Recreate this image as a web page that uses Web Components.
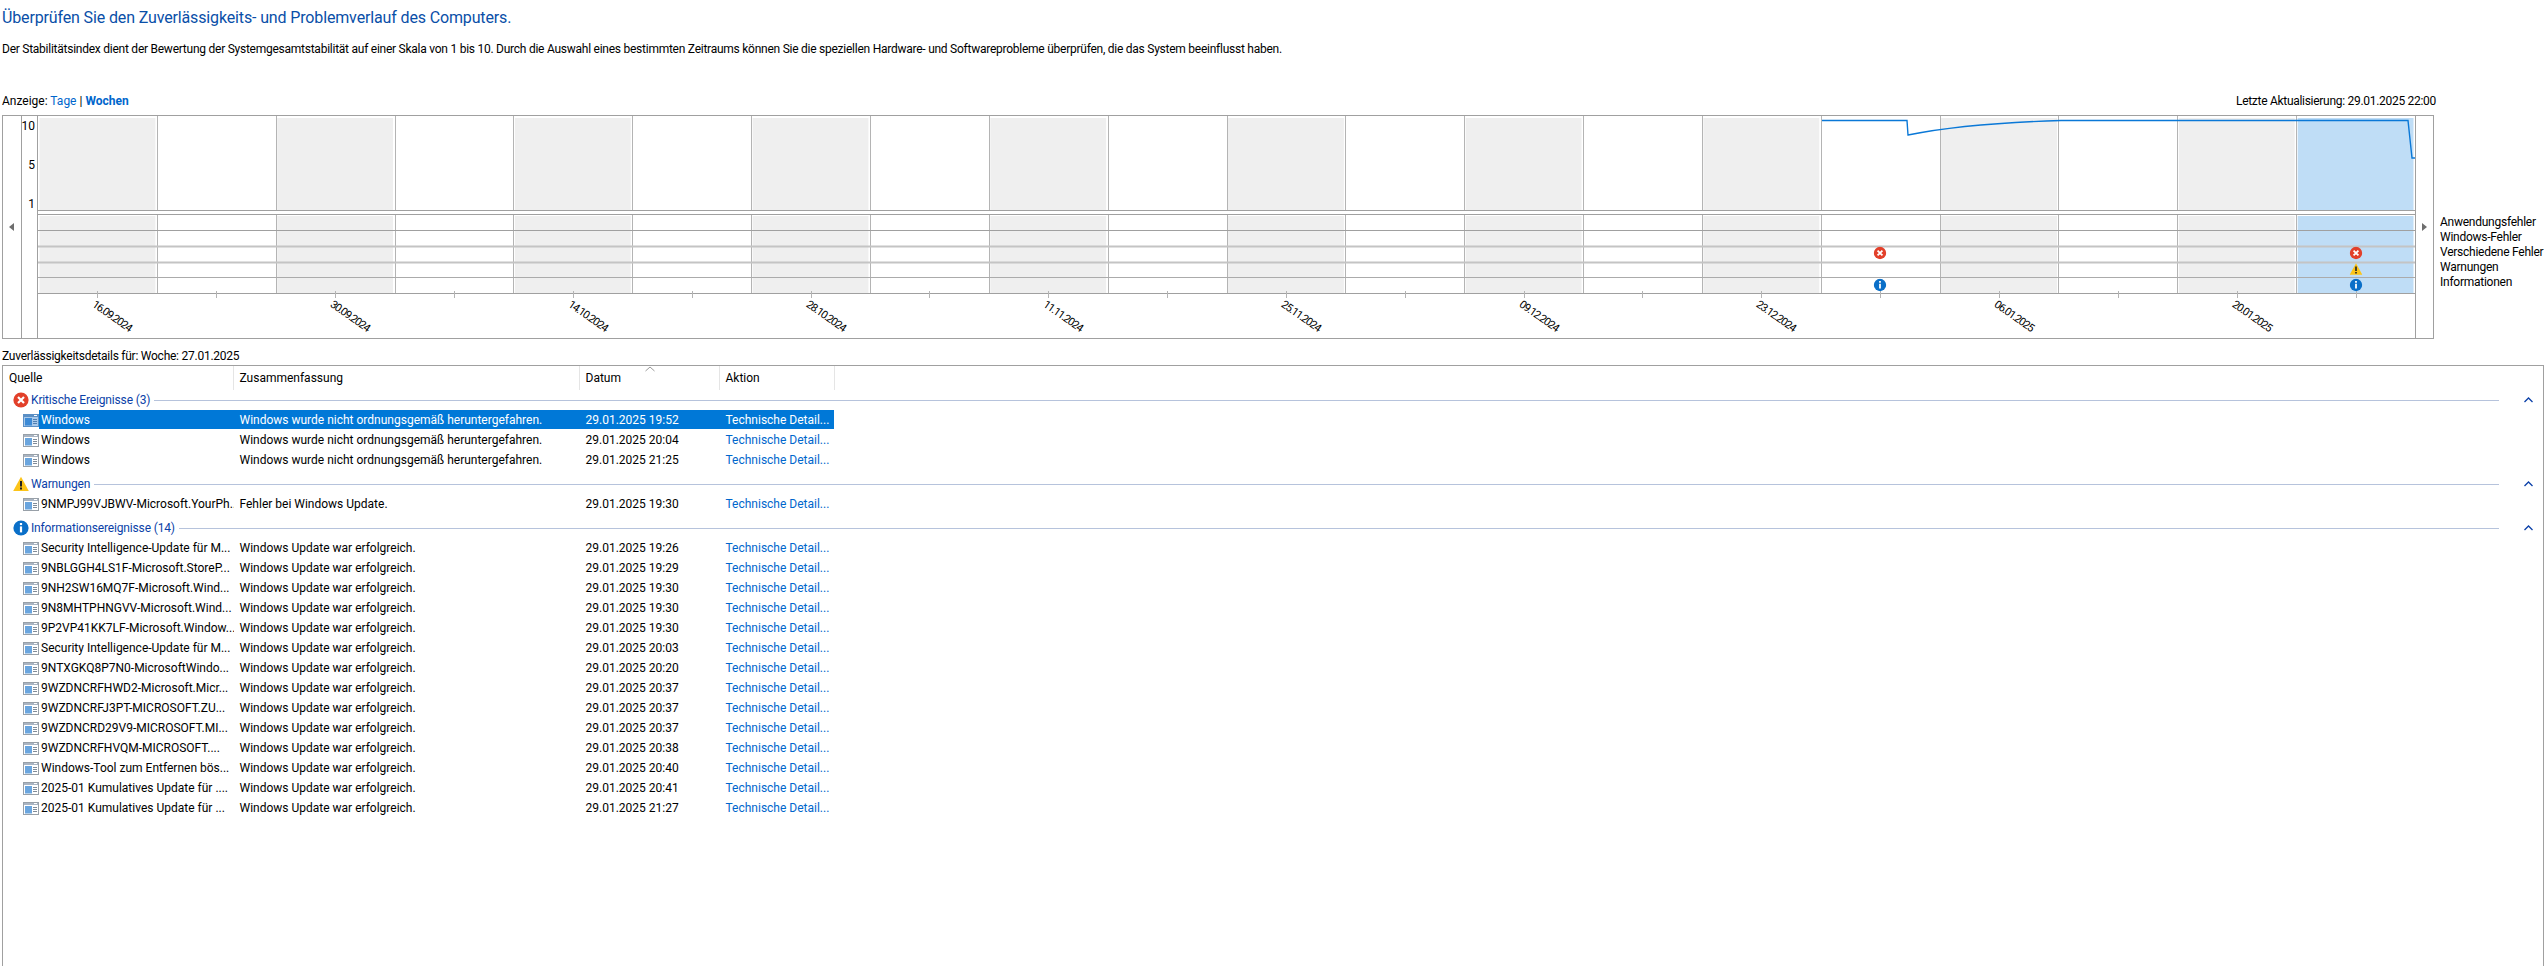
<!DOCTYPE html>
<html lang="de">
<head>
<meta charset="utf-8">
<title>Zuverlässigkeitsverlauf</title>
<style>
  html,body{margin:0;padding:0;background:#fff;height:100%;overflow:hidden;}
  body{font:12px/16px Roboto,"Noto Sans",sans-serif;color:#000;}
</style>
</head>
<body>
<rel-page></rel-page>
<script>
const FONT = `Roboto,"Noto Sans",sans-serif`;
const ICONS = {
  error: s => `<svg width="${s}" height="${s}" viewBox="0 0 16 16"><circle cx="8" cy="8" r="7.6" fill="#e2402a"/><path d="M5 5l6 6M11 5l-6 6" stroke="#fff" stroke-width="2.2"/></svg>`,
  warn: s => `<svg width="${s}" height="${s}" viewBox="0 0 16 16"><path d="M8 .8L15.8 15H.2z" fill="#fcc419"/><path d="M8 5v5.4" stroke="#222" stroke-width="2"/><path d="M7 11.6h2v2H7z" fill="#222"/></svg>`,
  info: s => `<svg width="${s}" height="${s}" viewBox="0 0 16 16"><circle cx="8" cy="8" r="7.6" fill="#0a6fc8"/><path d="M8 6.4v6" stroke="#fff" stroke-width="2.2"/><path d="M6.9 3h2.2v2.1H6.9z" fill="#fff"/></svg>`
};

class RelChart extends HTMLElement{
  constructor(){
    super();
    this.attachShadow({mode:'open'});
    const colW = 118.85, left = 0;
    const dates = ['16.09.2024','30.09.2024','14.10.2024','28.10.2024','11.11.2024','25.11.2024','09.12.2024','23.12.2024','06.01.2025','20.01.2025'];
    let fills = '', lines = '', ticks = '', labels = '';
    for(let i=0;i<20;i++){
      const x = left + i*colW;
      if(i==19){
        fills += `<rect x="${x+1.5}" y="2" width="${colW-3}" height="92" fill="#bfddf6"/><rect x="${x+1.5}" y="100" width="${colW-3}" height="77" fill="#bfddf6"/>`;
      }else if(i%2==0){
        fills += `<rect x="${x+1.5}" y="2" width="${colW-3}" height="92" fill="#efefef"/><rect x="${x+1.5}" y="100" width="${colW-3}" height="77" fill="#efefef"/>`;
      }
      if(i>0){
        const lx = Math.round(x)+.5;
        lines += `<path d="M${lx} 0V95M${lx} 99V178" stroke="#b4b4b4"/>`;
      }
      const c = Math.round(x+colW/2)+.5;
      ticks += `<path d="M${c} 175V182" stroke="#b4b4b4"/>`;
      if(i%2==0){
        labels += `<text x="${c-6}" y="190" transform="rotate(35 ${c-6} 190)">${dates[i/2]}</text>`;
      }
    }
    const ev = (x,y,kind) => `<g transform="translate(${x-6.5} ${y-6.5})">${ICONS[kind](13)}</g>`;
    this.shadowRoot.innerHTML = `
      <style>
        :host{display:grid;grid-template-columns:18px 17px 2377px 18px;width:2432px;height:224px;border:1px solid #a0a0a0;box-sizing:border-box;margin-left:2px;}
        .arrow{display:flex;align-items:center;justify-content:center;padding-bottom:1px;}
        .axis{border-left:1px solid #a0a0a0;border-right:1px solid #a0a0a0;display:flex;flex-direction:column;align-items:flex-end;padding:2px 2px 0 0;font:12px/16px ${FONT};box-sizing:border-box;}
        .axis span{height:39px;}
        svg.plot{display:block;overflow:visible;}
        svg.plot text{font:11px ${FONT};letter-spacing:-1px;fill:#000;}
        .r{border-left:1px solid #a0a0a0;}
      </style>
      <div class="arrow"><svg width="6" height="8"><path d="M5 0v8L0 4z" fill="#6e6e6e"/></svg></div>
      <div class="axis"><span>10</span><span>5</span><span>1</span></div>
      <svg class="plot" width="2377" height="222" viewBox="0 0 2377 222">
        ${fills}${lines}
        <path d="M0 94.500H2377M0 98.500H2377M0 114.500H2377M0 177.500H2377" stroke="#a0a0a0" fill="none"/>
        <path d="M0 130.500H2377M0 146.500H2377" stroke="#c4c4c4" stroke-width="2" fill="none"/>
        <path d="M0 161.500H2377" stroke="#ababab" fill="none"/>
        ${ticks}
        <path d="M1784 4.500H1869L1870 19C1910 11 1970 6 2023 4.500H2370L2374 42H2377" stroke="#0a78d7" stroke-width="1.4" fill="none"/>
        ${ev(1842,137,'error')}${ev(1842,169,'info')}
        ${ev(2318,137,'error')}${ev(2318,153,'warn')}${ev(2318,169,'info')}
        ${labels}
      </svg>
      <div class="arrow r"><svg width="6" height="8"><path d="M0 0v8L5 4z" fill="#6e6e6e"/></svg></div>`;
  }
}
customElements.define('rel-chart',RelChart);

class RelLegend extends HTMLElement{
  constructor(){
    super();
    this.attachShadow({mode:'open'});
    this.shadowRoot.innerHTML = `
      <style>
        :host{display:block;position:absolute;left:2440px;top:215px;font:12px/15px ${FONT};letter-spacing:-.25px;white-space:nowrap;}
        div{height:15px;}
      </style>
      <div>Anwendungsfehler</div><div>Windows-Fehler</div><div>Verschiedene Fehler</div><div>Warnungen</div><div>Informationen</div>`;
  }
}
customElements.define('rel-legend',RelLegend);

// columns are shared by the header and the rows
const GRID = `display:grid;grid-template-columns:230.500px 346px 140px 115.500px;`;

class RelRow extends HTMLElement{
  constructor(){
    super();
    this.attachShadow({mode:'open'});
    const sel = this.hasAttribute('selected');
    this.shadowRoot.innerHTML = `
      <style>
        :host{display:block;height:20px;}
        .row{${GRID}width:832px;height:20px;align-items:center;font:12px/19px ${FONT};white-space:nowrap;position:relative;}
        .c{padding-left:6px;overflow:hidden;height:19px;position:relative;}
        .c0{padding-left:38px;}
        .ic{position:absolute;left:20px;top:4px;display:block;}
        .hl{position:absolute;left:36px;top:0;width:795px;height:19px;background:#0078d7;}
        a{color:#06c;text-decoration:none;}
        .sel,.sel a{color:#fff;}
      </style>
      <div class="row ${sel?'sel':''}">
        ${sel?'<div class="hl"></div>':''}
        <div class="c c0"><slot name="src"></slot></div>
        <div class="c"><slot name="sum"></slot></div>
        <div class="c"><slot name="date"></slot></div>
        <div class="c"><a>Technische Detail...</a></div>
        <svg class="ic" width="16" height="13" viewBox="0 0 16 13">
          <rect x=".5" y=".5" width="15" height="12" fill="${sel?'#a9c9ea':'#fff'}" stroke="${sel?'#5b8fc4':'#98a0a8'}"/>
          <rect x="1" y="1" width="14" height="2" fill="${sel?'#5b8fc4':'#a9b4c2'}"/>
          <rect x="11" y="1" width="3" height="1" fill="#fff"/>
          <rect x="2" y="4" width="7" height="7.500" fill="${sel?'#3c8ad6':'#6aa5de'}"/>
          <path d="M10 5.500h4M10 7.500h4M10 9.500h4" stroke="${sel?'#4f7fb2':'#7f8b99'}"/>
        </svg>
      </div>`;
  }
}
customElements.define('rel-row',RelRow);

class RelGroup extends HTMLElement{
  constructor(){
    super();
    this.attachShadow({mode:'open'});
    this.shadowRoot.innerHTML = `
      <style>
        :host{display:block;margin-bottom:4px;}
        .h{display:flex;align-items:center;height:20px;position:relative;padding-left:10px;font:12px/20px ${FONT};letter-spacing:-.15px;color:#0a3fa8;}
        .h svg.i{flex:none;}
        .name{margin-left:2px;}
        .line{flex:1;height:1px;background:#b6c3dc;margin:0 44px 0 4px;}
        .chev{position:absolute;right:10px;top:7px;}
        ::slotted(*){display:block;}
      </style>
      <div class="h">
        ${ICONS[this.getAttribute('kind')](16)}
        <span class="name">${this.getAttribute('label')}</span><div class="line"></div>
        <svg class="chev" width="9" height="6"><path d="M.5 5L4.500 1l4 4" stroke="#0a3fa8" fill="none" stroke-width="1.300"/></svg>
      </div>
      <slot></slot>`;
  }
}
customElements.define('rel-group',RelGroup);

class RelTable extends HTMLElement{
  constructor(){
    super();
    this.attachShadow({mode:'open'});
    this.shadowRoot.innerHTML = `
      <style>
        :host{display:block;position:absolute;left:2px;top:365px;right:0;bottom:-1px;border:1px solid #a0a0a0;box-sizing:border-box;overflow:hidden;}
        .head{${GRID}width:832px;height:24px;font:12px/24px ${FONT};position:relative;}
        .head div{padding-left:6px;border-right:1px solid #e5e5e5;}
        .sort{position:absolute;left:642px;top:0;}
        .body{padding-top:0;}
      </style>
      <div class="head">
        <div>Quelle</div><div>Zusammenfassung</div><div>Datum</div><div>Aktion</div>
        <svg class="sort" width="10" height="6"><path d="M.5 5L5 1l4.500 4" stroke="#9a9a9a" fill="none"/></svg>
      </div>
      <div class="body"><slot></slot></div>`;
  }
}
customElements.define('rel-table',RelTable);

class RelPage extends HTMLElement{
  constructor(){
    super();
    this.attachShadow({mode:'open'});
    const row = (src,sum,date,sel) => `<rel-row ${sel?'selected':''}><span slot="src">${src}</span><span slot="sum">${sum}</span><span slot="date">${date}</span></rel-row>`;
    const shut = 'Windows wurde nicht ordnungsgemäß heruntergefahren.';
    const ok = 'Windows Update war erfolgreich.';
    const updates = [
      ['Security Intelligence-Update für M...','29.01.2025 19:26'],
      ['9NBLGGH4LS1F-Microsoft.StoreP...','29.01.2025 19:29'],
      ['9NH2SW16MQ7F-Microsoft.Wind...','29.01.2025 19:30'],
      ['9N8MHTPHNGVV-Microsoft.Wind...','29.01.2025 19:30'],
      ['9P2VP41KK7LF-Microsoft.Window...','29.01.2025 19:30'],
      ['Security Intelligence-Update für M...','29.01.2025 20:03'],
      ['9NTXGKQ8P7N0-MicrosoftWindo...','29.01.2025 20:20'],
      ['9WZDNCRFHWD2-Microsoft.Micr...','29.01.2025 20:37'],
      ['9WZDNCRFJ3PT-MICROSOFT.ZU...','29.01.2025 20:37'],
      ['9WZDNCRD29V9-MICROSOFT.MI...','29.01.2025 20:37'],
      ['9WZDNCRFHVQM-MICROSOFT....','29.01.2025 20:38'],
      ['Windows-Tool zum Entfernen bös...','29.01.2025 20:40'],
      ['2025-01 Kumulatives Update für ....','29.01.2025 20:41'],
      ['2025-01 Kumulatives Update für ...','29.01.2025 21:27']
    ];
    this.shadowRoot.innerHTML = `
      <style>
        :host{display:block;position:relative;width:2544px;height:966px;overflow:hidden;font:12px/16px ${FONT};}
        .title{font-size:16px;line-height:20px;letter-spacing:-.14px;color:#0a4fa8;padding:8px 0 0 2px;height:28px;}
        .desc{padding:5px 0 0 2px;height:43px;letter-spacing:-.25px;}
        .bar{display:flex;justify-content:space-between;width:2436px;padding-left:2px;height:14px;margin-top:9px;line-height:16px;margin-bottom:8px;box-sizing:border-box;}
        .upd{letter-spacing:-.29px;}
        a{color:#06c;text-decoration:none;}
        b{font-weight:700;}
        .det{position:absolute;left:2px;top:348px;letter-spacing:-.25px;}
      </style>
      <div class="title">Überprüfen Sie den Zuverlässigkeits- und Problemverlauf des Computers.</div>
      <div class="desc">Der Stabilitätsindex dient der Bewertung der Systemgesamtstabilität auf einer Skala von 1 bis 10. Durch die Auswahl eines bestimmten Zeitraums können Sie die speziellen Hardware- und Softwareprobleme überprüfen, die das System beeinflusst haben.</div>
      <div class="bar"><span>Anzeige: <a>Tage</a> | <a><b>Wochen</b></a></span><span class="upd">Letzte Aktualisierung: 29.01.2025 22:00</span></div>
      <rel-chart></rel-chart>
      <rel-legend></rel-legend>
      <div class="det">Zuverlässigkeitsdetails für: Woche: 27.01.2025</div>
      <rel-table>
        <rel-group kind="error" label="Kritische Ereignisse (3)">
          ${row('Windows',shut,'29.01.2025 19:52',true)}${row('Windows',shut,'29.01.2025 20:04')}${row('Windows',shut,'29.01.2025 21:25')}
        </rel-group>
        <rel-group kind="warn" label="Warnungen">
          ${row('9NMPJ99VJBWV-Microsoft.YourPh...','Fehler bei Windows Update.','29.01.2025 19:30')}
        </rel-group>
        <rel-group kind="info" label="Informationsereignisse (14)">
          ${updates.map(u=>row(u[0],ok,u[1])).join('')}
        </rel-group>
      </rel-table>`;
  }
}
customElements.define('rel-page',RelPage);
</script>
</body>
</html>
